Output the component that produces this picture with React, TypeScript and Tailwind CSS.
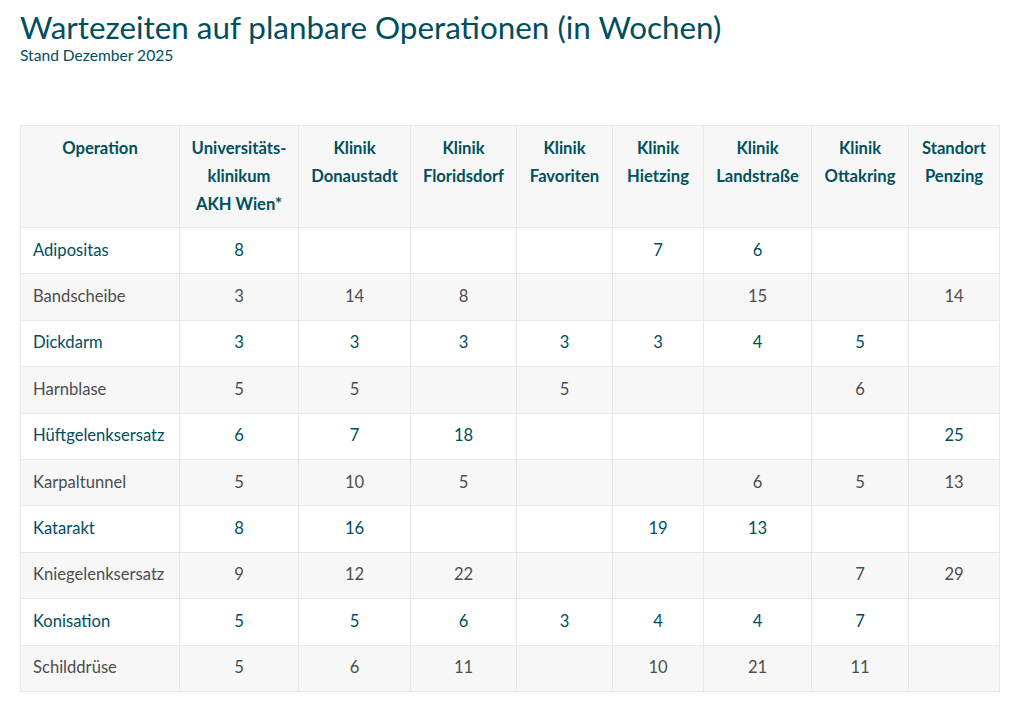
const HOSPITALS = [
  ['Universitäts-', 'klinikum', 'AKH Wien*'],
  ['Klinik', 'Donaustadt'],
  ['Klinik', 'Floridsdorf'],
  ['Klinik', 'Favoriten'],
  ['Klinik', 'Hietzing'],
  ['Klinik', 'Landstraße'],
  ['Klinik', 'Ottakring'],
  ['Standort', 'Penzing'],
];

const WIDTHS = ['w-[159px]', 'w-[119px]', 'w-[112px]', 'w-[106px]', 'w-[96px]', 'w-[91px]', 'w-[108px]', 'w-[97px]', 'w-[91px]'];

const ROWS: [string, (number | null)[]][] = [
  ['Adipositas', [8, null, null, null, 7, 6, null, null]],
  ['Bandscheibe', [3, 14, 8, null, null, 15, null, 14]],
  ['Dickdarm', [3, 3, 3, 3, 3, 4, 5, null]],
  ['Harnblase', [5, 5, null, 5, null, null, 6, null]],
  ['Hüftgelenksersatz', [6, 7, 18, null, null, null, null, 25]],
  ['Karpaltunnel', [5, 10, 5, null, null, 6, 5, 13]],
  ['Katarakt', [8, 16, null, null, 19, 13, null, null]],
  ['Kniegelenksersatz', [9, 12, 22, null, null, null, 7, 29]],
  ['Konisation', [5, 5, 6, 3, 4, 4, 7, null]],
  ['Schilddrüse', [5, 6, 11, null, 10, 21, 11, null]],
];

export default function App() {
  return (
    <div className="min-h-screen bg-white px-5 pt-[9px] font-['Lato',sans-serif]">
      <h1 className="text-[31.4px] leading-[36px] text-[#004e5e]">
        Wartezeiten auf planbare Operationen (in Wochen)
      </h1>
      <p className="text-[15.6px] leading-[20px] text-[#004e5e]">Stand Dezember 2025</p>

      <table className="mt-[60px] w-[979px] table-fixed border-collapse text-[16.6px]">
        <thead>
          <tr className="bg-[#f7f7f7]">
            <th className={`${WIDTHS[0]} h-[102px] border border-[#e8e8e8] px-2 pt-[8px] align-top font-bold leading-[28px] text-[#00505e]`}>
              Operation
            </th>
            {HOSPITALS.map((h, i) => (
              <th
                key={i}
                className={`${WIDTHS[i + 1]} h-[102px] border border-[#e8e8e8] px-1 pt-[8px] align-top font-bold leading-[28px] text-[#00505e]`}
              >
                {h.map((line) => (
                  <div key={line}>{line}</div>
                ))}
              </th>
            ))}
          </tr>
        </thead>
        <tbody>
          {ROWS.map(([name, vals], r) => {
            const even = r % 2 === 1;
            return (
              <tr key={name} className={even ? 'bg-[#f7f7f7] text-[#4d4d4d]' : 'bg-white text-[#004e5e]'}>
                <td className="h-[46.4px] border border-[#e8e8e8] px-3 pb-[2px] leading-[24px]">{name}</td>
                {vals.map((v, i) => (
                  <td key={i} className="border border-[#e8e8e8] pb-[2px] text-center leading-[24px]">
                    {v ?? ''}
                  </td>
                ))}
              </tr>
            );
          })}
        </tbody>
      </table>
    </div>
  );
}
